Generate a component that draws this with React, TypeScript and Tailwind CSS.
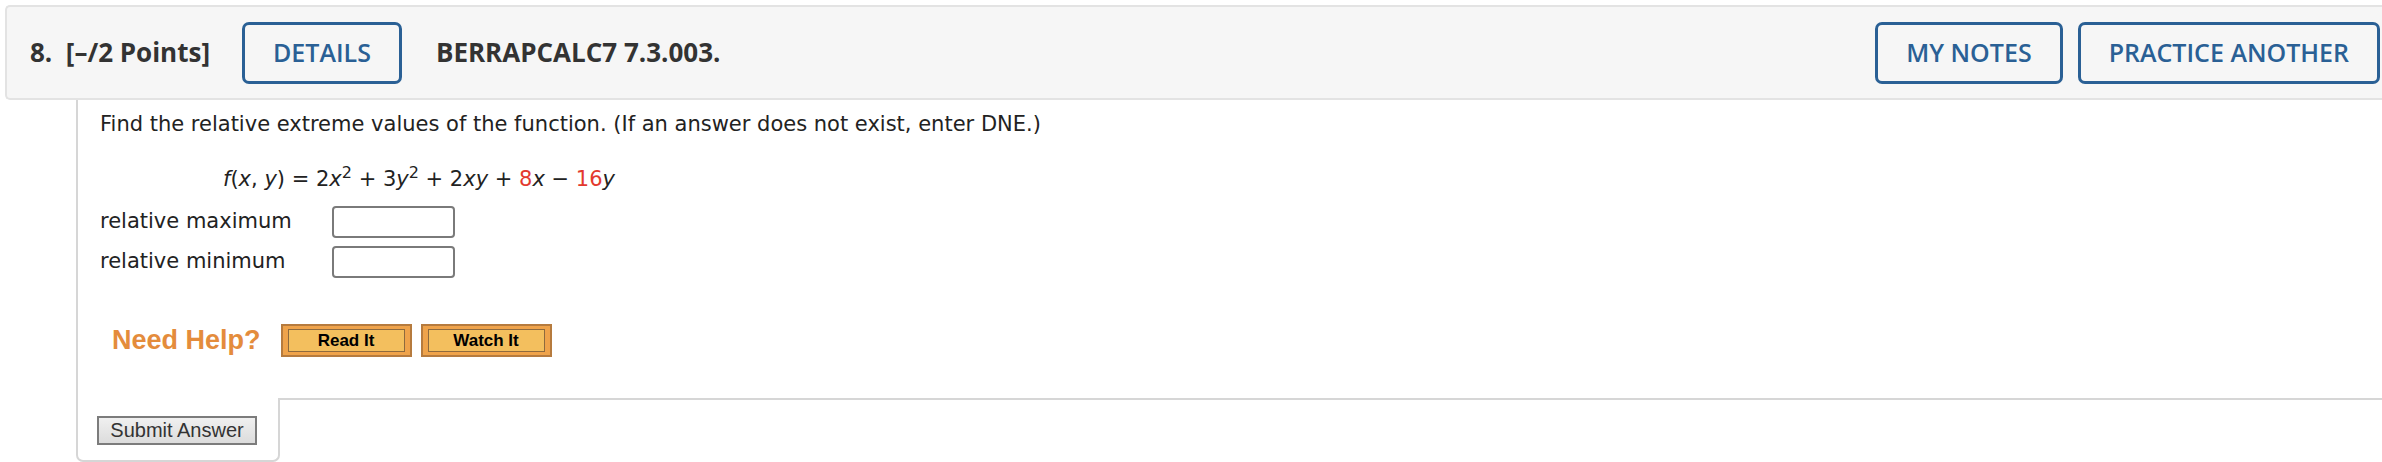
import React from 'react'

const headerFont = { fontFamily: '"Open Sans", "Noto Sans", sans-serif' }
const bodyFont = { fontFamily: '"DejaVu Sans", Verdana, sans-serif' }
const arial = { fontFamily: '"Liberation Sans", Arial, sans-serif' }

function OutlineButton({ label }: { label: string }) {
  return (
    <button
      className="h-[62px] px-[28px] border-[3px] border-[#2a6095] rounded-[7px] text-[#2a6095] text-[25px] font-semibold bg-transparent"
      style={headerFont}
    >
      {label}
    </button>
  )
}

function HelpButton({ label }: { label: string }) {
  return (
    <div className="w-[131px] h-[33px] border-2 border-[#b67b3e] bg-[#efa34b] px-[5px] py-[3px]">
      <div
        className="h-full border border-[#8e6a3e] bg-[#f3bf5e] flex items-center justify-center text-[17px] font-bold text-black"
        style={arial}
      >
        {label}
      </div>
    </div>
  )
}

function AnswerRow({ label }: { label: string }) {
  return (
    <div className="flex items-center h-[32px]">
      <span className="w-[232px]">{label}</span>
      <div className="w-[123px] h-[32px] border-2 border-[#7a7a7a] rounded-[4px] bg-white" />
    </div>
  )
}

export default function App() {
  return (
    <div className="w-[2382px] h-[462px] bg-white overflow-hidden pt-[5px] text-[#222]">
      {/* Question header */}
      <div
        className="ml-[5px] h-[95px] flex items-center border-2 border-r-0 border-[#e3e3e3] rounded-l-[5px] bg-[#f6f6f6] pl-[23px] pr-[2px]"
        style={headerFont}
      >
        <span className="text-[26px] font-bold text-[#333]">8.&nbsp; [–/2 Points]</span>
        <div className="ml-[32px]">
          <OutlineButton label="DETAILS" />
        </div>
        <span className="ml-[34px] text-[26px] font-bold text-[#333]">BERRAPCALC7 7.3.003.</span>
        <div className="ml-auto flex gap-[15px]">
          <OutlineButton label="MY NOTES" />
          <OutlineButton label="PRACTICE ANOTHER" />
        </div>
      </div>

      {/* Question body */}
      <div className="ml-[76px] border-l-2 border-[#d6d6d6] pl-[22px] pt-[12px] pb-[37px] text-[21px] text-[#222]" style={bodyFont}>
        <p className="leading-[24px]">
          Find the relative extreme values of the function. (If an answer does not exist, enter DNE.)
        </p>
        <p className="mt-[31px] ml-[123px] leading-[24px] whitespace-nowrap">
          <i>f</i>(<i>x</i>, <i>y</i>) = 2<i>x</i>
          <sup className="text-[16px] leading-none">2</sup> + 3<i>y</i>
          <sup className="text-[16px] leading-none">2</sup> + 2<i>xy</i> +{' '}
          <span className="text-[#e3392e]">8</span>
          <i>x</i> − <span className="text-[#e3392e]">16</span>
          <i>y</i>
        </p>
        <div className="mt-[15px] flex flex-col gap-[8px]">
          <AnswerRow label="relative maximum" />
          <AnswerRow label="relative minimum" />
        </div>
        <div className="mt-[42px] ml-[12px] flex items-center">
          <span className="text-[27px] font-bold text-[#e48c3c] mr-[20px]" style={arial}>
            Need Help?
          </span>
          <div className="flex gap-[9px]">
            <HelpButton label="Read It" />
            <HelpButton label="Watch It" />
          </div>
        </div>
      </div>

      {/* Submit area */}
      <div className="flex">
        <div className="ml-[76px] w-[204px] h-[64px] border-2 border-t-0 border-[#d6d6d6] rounded-b-[7px] pl-[19px] pt-[18px]">
          <button
            className="w-[160px] h-[29px] border-2 border-[#7c7c7c] bg-gradient-to-b from-[#f0f0f0] to-[#dcdcdc] text-[20px] text-[#333] leading-none"
            style={arial}
          >
            Submit Answer
          </button>
        </div>
        <div className="flex-1 border-t-2 border-[#d6d6d6]" />
      </div>
    </div>
  )
}
